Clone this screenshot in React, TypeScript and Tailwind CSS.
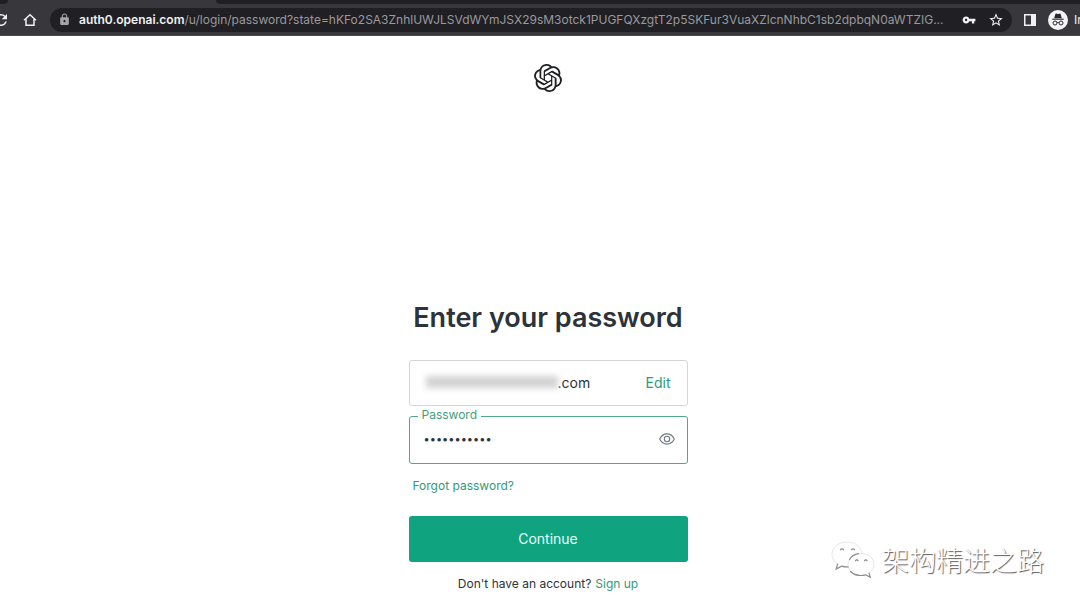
import React from 'react';
import { MdLock, MdRefresh, MdStarBorder, MdVpnKey } from 'react-icons/md';
import { SiOpenai } from 'react-icons/si';

const URL_HOST = 'auth0.openai.com';
const URL_PATH =
  '/u/login/password?state=hKFo2SA3ZnhlUWJLSVdWYmJSX29sM3otck1PUGFQXzgtT2p5SKFur3VuaXZlcnNhbC1sb2dpbqN0aWTZIG...';

const HomeIcon: React.FC = () => (
  <svg className="h-4 w-4" viewBox="0 0 16 16" fill="none" stroke="#f1f1f3" strokeWidth="1.5">
    <path d="M2 8.300L8 2.800l6 5.500M4 7v6.200h8V7" />
  </svg>
);

const SidePanelIcon: React.FC = () => (
  <svg className="h-3 w-3" viewBox="0 0 12 12" fill="none">
    <rect x="0.75" y="0.75" width="10.5" height="10.5" stroke="#f1f1f3" strokeWidth="1.5" />
    <rect x="7" y="1" width="4.5" height="10" fill="#f1f1f3" />
  </svg>
);

const IncognitoIcon: React.FC = () => (
  <svg className="h-5 w-5 shrink-0" viewBox="0 0 20 20" fill="none">
    <circle cx="10" cy="10" r="10" fill="#f4f4f6" />
    <path d="M7.3 4.3c.2-.7.8-.8 1.3-.6l1.4.4 1.4-.4c.5-.2 1.1-.1 1.3.6l1.1 4H6.2z" fill="#29292d" />
    <path d="M4.3 9.2h11.4" stroke="#29292d" strokeWidth="1.1" />
    <circle cx="7" cy="13" r="2" stroke="#29292d" />
    <circle cx="13" cy="13" r="2" stroke="#29292d" />
    <path d="M9 12.8c.6-.5 1.4-.5 2 0" stroke="#29292d" />
  </svg>
);

const EyeIcon: React.FC = () => (
  <svg className="h-4 w-4" viewBox="0 0 16 16" fill="none" stroke="#6f7780" strokeWidth="1.1">
    <path d="M.7 8C2.3 4.700 5 2.900 8 2.900S13.700 4.700 15.300 8C13.700 11.300 11 13.100 8 13.100S2.300 11.300.7 8z" />
    <circle cx="8" cy="8" r="2.700" />
  </svg>
);

const WeChatIcon: React.FC = () => (
  <svg className="h-10 w-12" viewBox="0 0 48 40" fill="none">
    <g stroke="#dedede" strokeWidth="0.8" fill="#fff">
      <path d="M17 2C8.500 2 2 7.500 2 14.500c0 4 2.200 7.400 5.600 9.700L6.200 29l5.400-2.900c1.700.5 3.500.8 5.400.8 8.300 0 15-5.500 15-12.400S25.300 2 17 2z" />
      <path d="M31 13.500c-7.300 0-13 4.900-13 11s5.700 11 13 11c1.600 0 3.200-.3 4.600-.7l4.700 2.600-1.200-4.200c3-2 4.900-5.200 4.900-8.700 0-6.100-5.700-11-13-11z" />
    </g>
    <g stroke="#8f8f8f" strokeWidth="1.200" strokeLinecap="round">
      <path d="M7.600 24.200L6.200 29l5.400-2.900c1.800.6 4 .9 6.500.8" />
      <path d="M20.500 31.500c2.600 2.700 6.300 4 10.500 4 1.600 0 3.200-.3 4.600-.7l4.700 2.600-1.200-4.200" />
      <path d="M10.500 9.800c.5-1.300 2.600-1.300 3.100 0M21.500 9.800c.5-1.300 2.600-1.300 3.100 0" />
      <path d="M25.500 20.800c.4-1.200 2.200-1.200 2.600 0M34.500 20.800c.4-1.200 2.200-1.200 2.600 0" />
      <path d="M19.500 19.500c1.800-3.300 5.200-5.300 9-5.900" />
    </g>
  </svg>
);

const BrowserBar: React.FC = () => (
  <header className="bg-[#38383c]">
    <div className="flex h-1 justify-between">
      <div className="w-2 rounded-br bg-[#202024]"></div>
      <div className="ml-52 flex-1 rounded-bl bg-[#202024]"></div>
    </div>
    <div className="flex h-8 items-center overflow-hidden border-b border-[#4a4a4d] text-[#f1f1f3]">
      <button type="button" aria-label="Reload" className="-ml-2 shrink-0">
        <MdRefresh size={18} />
      </button>
      <button type="button" aria-label="Home" className="ml-3 shrink-0">
        <HomeIcon />
      </button>
      <div className="ml-3 flex h-6 min-w-0 flex-1 items-center rounded-full bg-[#202024] px-2">
        <MdLock size={13} className="shrink-0 text-[#a5a5a9]" />
        <p className="ml-2 min-w-0 flex-1 overflow-hidden whitespace-nowrap text-[12px] text-[#99999e]">
          <span className="font-semibold text-[#f1f1f3]">{URL_HOST}</span>
          {URL_PATH}
        </p>
        <button type="button" aria-label="Saved passwords" className="ml-2 shrink-0">
          <MdVpnKey size={14} />
        </button>
        <button type="button" aria-label="Bookmark this page" className="ml-3 shrink-0">
          <MdStarBorder size={16} />
        </button>
      </div>
      <button type="button" aria-label="Side panel" className="ml-3 shrink-0">
        <SidePanelIcon />
      </button>
      <button type="button" className="ml-3 flex w-8 shrink-0 items-center gap-1.5 overflow-hidden text-[12px]">
        <IncognitoIcon />
        In
      </button>
    </div>
  </header>
);

const App: React.FC = () => {
  return (
    <div className="relative min-h-screen bg-white font-['Inter',sans-serif] text-[#2d333a]">
      <BrowserBar />

      <main className="flex flex-col items-center pl-4 pt-7">
        <SiOpenai size={28} className="text-[#202123]" />

        <h1 className="mt-52 whitespace-nowrap text-[27px] font-semibold leading-9">Enter your password</h1>

        <form className="mt-6 w-full max-w-[279px]">
          <div className="flex h-[46px] items-center justify-between rounded-[3px] border border-[#d3d5d8] pb-0.5 pl-3 pr-4 text-[14px]">
            <div className="flex items-center">
              <span className="ml-1 h-3 w-[132px] bg-[#d2d2d2] blur-[3px]"></span>
              <span>.com</span>
            </div>
            <a href="#edit" className="text-[#2a9d7c]">Edit</a>
          </div>

          <div className="relative mt-[10px] flex h-12 items-center rounded-[3px] border border-[#4fa98c] pb-0.5 pl-3.5 pr-3">
            <label htmlFor="password" className="absolute -top-2 left-2 bg-white px-1 text-[12px] leading-3 text-[#3f9f80]">
              Password
            </label>
            <input
              id="password"
              type="password"
              defaultValue="abcdefghijk"
              className="min-w-0 flex-1 bg-transparent text-[11px] outline-none"
            />
            <button type="button" aria-label="Show password">
              <EyeIcon />
            </button>
          </div>

          <a href="#forgot" className="ml-1 mt-3 inline-block text-[12px] leading-5 text-[#2f9a7a]">
            Forgot password?
          </a>

          <button type="submit" className="mt-5 block h-[46px] w-full rounded-[3px] bg-[#10a37f] pb-0.5 text-[14px] text-[#e2fff7]">
            Continue
          </button>
        </form>

        <p className="mt-3 text-[12px] leading-5">
          Don't have an account?
          <a href="#signup" className="ml-1 text-[#2a9d7c]">Sign up</a>
        </p>
      </main>

      <div className="absolute bottom-7 right-9 flex items-center gap-1">
        <WeChatIcon />
        <span className="font-['Noto_Sans_CJK_SC',sans-serif] text-[27px] font-light leading-10 text-white [text-shadow:1px_1px_1px_#555]">
          架构精进之路
        </span>
      </div>
    </div>
  );
};

export default App;
